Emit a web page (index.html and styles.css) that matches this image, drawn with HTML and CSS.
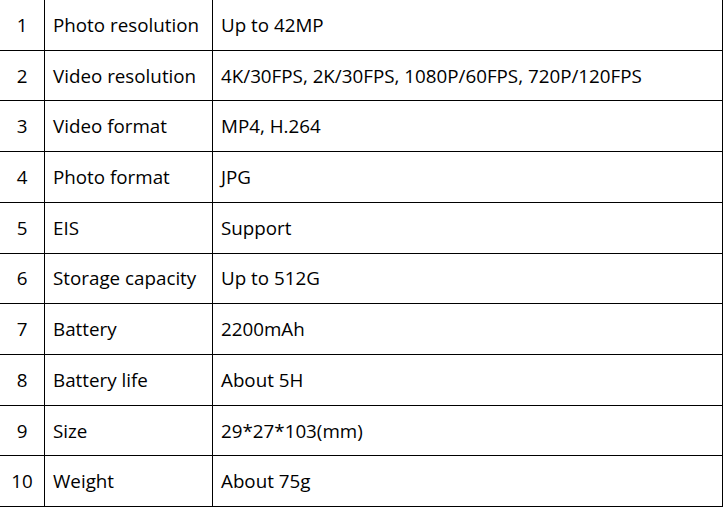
FILE: index.html
```html
<!DOCTYPE html>
<html>
<head>
<meta charset="utf-8">
<link rel="stylesheet" href="styles.css">
</head>
<body>
<div class="spec">
  <div class="num">1</div><div class="key">Photo resolution</div><div class="val">Up to 42MP</div>
  <div class="num">2</div><div class="key">Video resolution</div><div class="val">4K/30FPS, 2K/30FPS, 1080P/60FPS, 720P/120FPS</div>
  <div class="num">3</div><div class="key">Video format</div><div class="val">MP4, H.264</div>
  <div class="num">4</div><div class="key">Photo format</div><div class="val">JPG</div>
  <div class="num">5</div><div class="key">EIS</div><div class="val">Support</div>
  <div class="num">6</div><div class="key">Storage capacity</div><div class="val">Up to 512G</div>
  <div class="num">7</div><div class="key">Battery</div><div class="val">2200mAh</div>
  <div class="num">8</div><div class="key">Battery life</div><div class="val">About 5H</div>
  <div class="num">9</div><div class="key">Size</div><div class="val">29*27*103(mm)</div>
  <div class="num">10</div><div class="key">Weight</div><div class="val">About 75g</div>
</div>
</body>
</html>
```
FILE: styles.css
```css
html, body {
  margin: 0;
  padding: 0;
  background: #fff;
}
.spec {
  display: grid;
  grid-template-columns: 44px 167px 509px;
  grid-template-rows: repeat(10, 1fr);
  gap: 1px;
  padding: 0 1px 1px 0;
  width: 723px;
  height: 507px;
  box-sizing: border-box;
  background: #000;
  font-family: "Open Sans", "Lato", sans-serif;
  font-size: 18.8px;
  font-variant-ligatures: none;
  color: #000;
}
.spec > div {
  background: #fff;
  display: flex;
  align-items: center;
  line-height: 1;
  padding-top: 1px;
}
.num {
  justify-content: center;
}
.key, .val {
  padding-left: 8px;
}
```
